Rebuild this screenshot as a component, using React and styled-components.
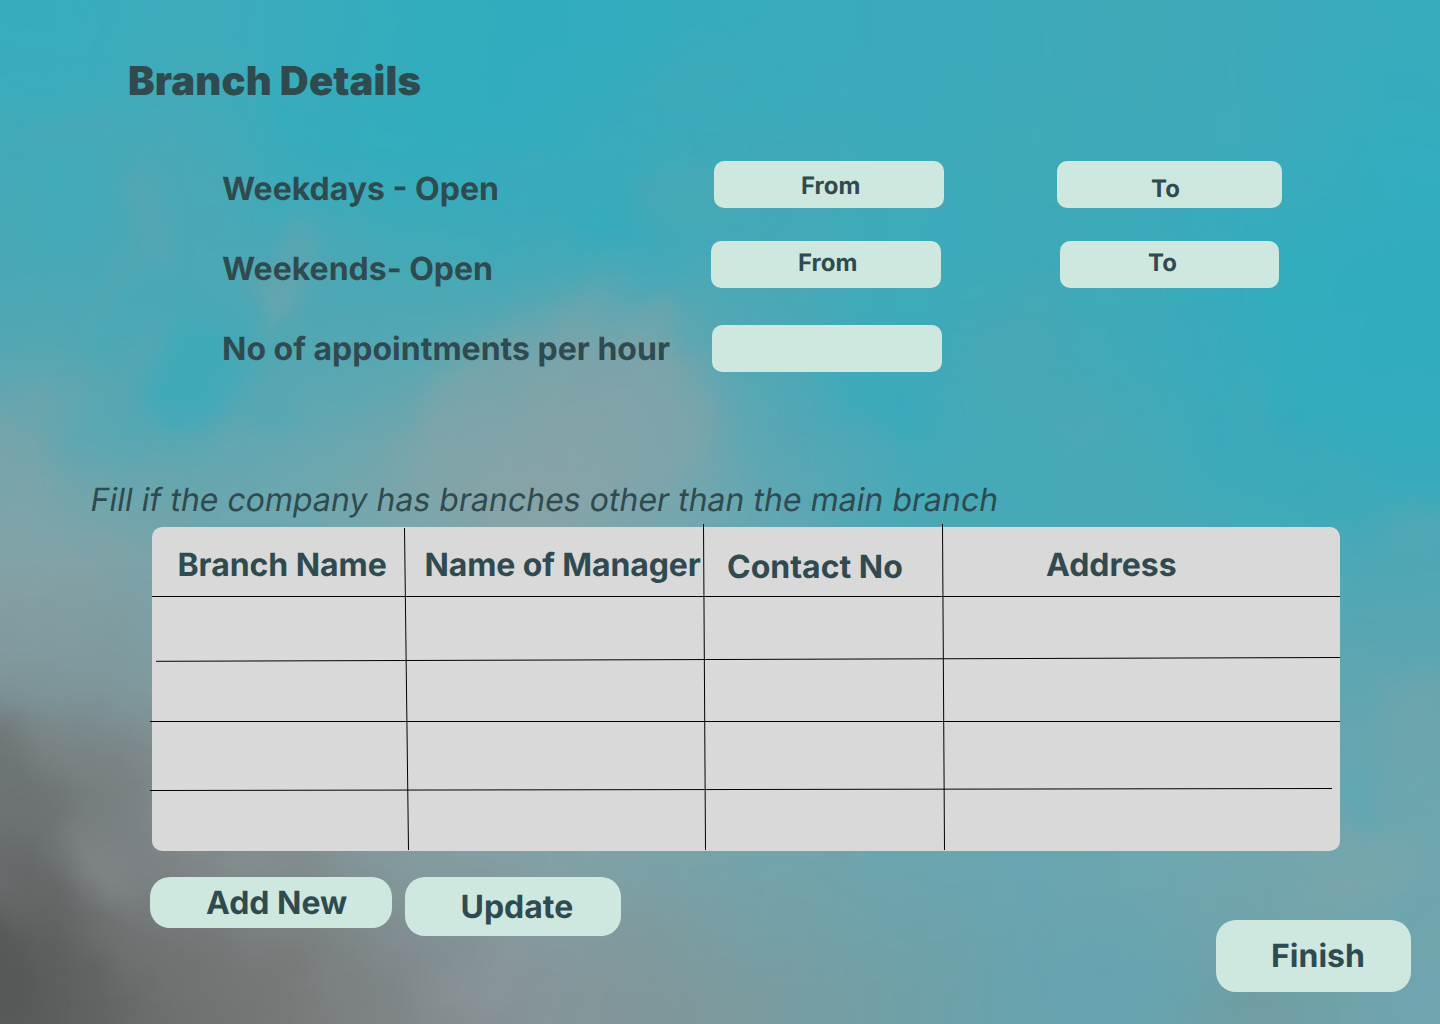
import React from "react";
import styled, { createGlobalStyle } from "styled-components";

const GlobalStyle = createGlobalStyle`
  *, *::before, *::after { box-sizing: border-box; }
  html, body { margin: 0; padding: 0; }
  body {
    font-family: Inter, "Liberation Sans", sans-serif;
    color: #2f4b4f;
    text-rendering: geometricPrecision;
  }
`;

const ink = "#2f4b4f";
const mint = "#cfe8df";

const Page = styled.main`
  position: relative;
  width: 1440px;
  height: 1024px;
  overflow: hidden;
  background: #3fa9b9;
  display: flex;
  flex-direction: column;
  align-items: flex-start;
`;

const Backdrop = styled.svg`
  position: absolute;
  inset: 0;
  width: 100%;
  height: 100%;
`;

const Content = styled.div`
  position: relative;
  width: 100%;
  display: flex;
  flex-direction: column;
  align-items: flex-start;
`;

const Title = styled.h1`
  margin: 57px 0 0 128px;
  font-size: 40px;
  line-height: 48px;
  font-weight: 870;
  letter-spacing: 0.13px;
  white-space: nowrap;
`;

const Form = styled.form`
  width: 100%;
  margin-top: 56px;
  padding-left: 222px;
  display: flex;
  flex-direction: column;
`;

const FormRow = styled.div`
  display: flex;
  align-items: flex-start;
  height: ${(p) => p.$height}px;
`;

const Label = styled.label`
  flex: none;
  width: ${(p) => p.$width}px;
  padding-top: ${(p) => p.$top}px;
  font-size: 32px;
  line-height: 39px;
  font-weight: 700;
  white-space: nowrap;
`;

const Field = styled.div`
  flex: none;
  width: ${(p) => p.$width}px;
  height: 47px;
  margin-right: ${(p) => p.$gap || 0}px;
  padding: ${(p) => p.$top || 0}px 0 0 ${(p) => p.$left || 0}px;
  border-radius: 10px;
  background: ${mint};
  font-size: 24px;
  line-height: 29px;
  font-weight: 700;
`;

const Hint = styled.p`
  margin: 108px 0 0 89px;
  font-size: 32px;
  line-height: 39px;
  font-weight: 400;
  letter-spacing: 0.02px;
  white-space: nowrap;
  transform: skewX(-9.4deg);
  transform-origin: 0 31px;
`;

const Table = styled.section`
  position: relative;
  width: 1188px;
  height: 324px;
  margin: 8px 0 0 152px;
  border-radius: 10px;
  background: #d9d9d9;
`;

const HeaderRow = styled.div`
  display: grid;
  grid-template-columns: 253px 299px 239px 1fr;
  height: 69px;
`;

const HeaderCell = styled.div`
  padding: ${(p) => p.$top}px 0 0 ${(p) => p.$left}px;
  font-size: 32px;
  line-height: 39px;
  font-weight: 700;
  letter-spacing: ${(p) => p.$tracking || 0}px;
  white-space: nowrap;
`;

const Rules = styled.svg`
  position: absolute;
  left: -2px;
  top: -3px;
  width: 1190px;
  height: 327px;
  stroke: #000;
  stroke-width: 1;
  overflow: visible;
`;

const Actions = styled.div`
  width: 100%;
  display: flex;
  align-items: flex-start;
  padding: 26px 29px 0 150px;
`;

const Button = styled.button`
  flex: none;
  width: ${(p) => p.$width}px;
  height: ${(p) => p.$height}px;
  margin: ${(p) => p.$margin || "0"};
  padding: ${(p) => p.$top}px 0 0 ${(p) => p.$left}px;
  display: flex;
  align-items: flex-start;
  border: 0;
  border-radius: 20px;
  background: ${mint};
  color: ${ink};
  font: 700 32px/39px Inter, "Liberation Sans", sans-serif;
  text-rendering: inherit;
  text-align: left;
  white-space: nowrap;
`;

// Sky colours on a 12 x 10 grid, blended together by the blur.
const sky = [
  "36adbd 3eabba 38acbc 32adbe 31acbe 33acbe 38acbc 3baaba 3daaba 40a9b8 3daaba 37acbc",
  "44a9b8 4ca8b5 34acbc 31adbe 33acbe 3cabba 40a9b9 3daaba 3faab8 3da9b9 3eaaba 33adbf",
  "47a8b6 4ba8b5 4ea7b4 43a9b7 40a9b8 40a9b9 48a8b6 3babba 3ca9b9 3daab9 31adbf 31acbe",
  "55a7b2 45a9b6 50a7b3 58a7b1 6aa6ad 6aa6ae 4ea8b5 3baabb 48a8b5 3fa9b9 34acbd 31acbe",
  "72a5ac 5ea7b1 6ba7b0 7aa6ab 86a4a8 7aa6ad 5ca7b3 45a9b8 46a9b7 48a9b6 36abbc 33acbe",
  "84a3a8 76a3a9 70a7af 7ca6ac 84a4a8 76a6ad 62a7b2 4ca8b5 45a9b7 48a9b6 46a9b7 4fa7b4",
  "7f989c 7f9ea3 80a0a4 7ca0a6 7ca0a6 76a3aa 6ca6b0 62a7b2 5aa7b3 55a7b3 55a7b3 5ea6b1",
  "747b7b 828f92 84989c 82a0a4 7fa2a7 78a4aa 70a6af 6aa7b0 66a7b1 64a7b1 62a7b1 6ca6af",
  "6a6d6d 808689 808b8c 849ca0 80a2a7 7aa1a7 72a4ac 6ca5af 69a6b1 6ea6af 74a6ad 6fa6af",
  "5c5d5d 6f7070 797b7a 80878a 869598 7f9799 789ca1 70a0a7 68a3ae 67a5b0 709fa5 70a4ae",
].map((row) => row.split(" "));

// Wisps and clouds: x, y, rx, ry, rotation, colour, opacity, softness.
const clouds = [
  [560, 425, 155, 100, -10, "#8aa3a7", 0.45, "mid"],
  [600, 380, 80, 60, -20, "#8ba3a7", 0.25, "mid"],
  [600, 325, 125, 32, -4, "#6aa6af", 0.4, "mid"],
  [655, 335, 20, 44, 35, "#82a4a8", 0.25, "fine"],
  [283, 280, 20, 68, 24, "#6ca5ad", 0.45, "fine"],
  [272, 300, 14, 18, 10, "#7ba4a9", 0.4, "fine"],
  [150, 208, 18, 58, -15, "#64a5ae", 0.35, "fine"],
  [122, 268, 10, 66, 20, "#64a5ae", 0.3, "fine"],
  [60, 205, 28, 55, 10, "#3cabba", 0.4, "mid"],
  [75, 130, 55, 14, -15, "#5aa6b0", 0.25, "fine"],
  [195, 380, 52, 46, 0, "#37aabb", 0.6, "mid"],
  [130, 360, 8, 50, 28, "#68a6ae", 0.45, "fine"],
  [105, 430, 42, 30, 0, "#4ba9b6", 0.5, "mid"],
  [285, 355, 9, 46, 20, "#5fa6b0", 0.4, "fine"],
  [280, 415, 24, 16, 0, "#4ca9b7", 0.4, "fine"],
  [10, 460, 26, 60, -20, "#85a3a8", 0.35, "mid"],
  [530, 160, 36, 8, -30, "#48a8b5", 0.5, "fine"],
  [690, 195, 55, 32, 0, "#50a7b2", 0.5, "mid"],
  [595, 220, 40, 30, 0, "#31adbe", 0.65, "mid"],
  [695, 80, 55, 26, -35, "#43a9b7", 0.5, "mid"],
  [1030, 325, 20, 76, 28, "#56a6b0", 0.3, "mid"],
  [875, 400, 62, 32, 14, "#35abbc", 0.6, "mid"],
  [895, 380, 26, 7, -35, "#51a8b4", 0.4, "fine"],
  [1080, 415, 42, 24, 30, "#56a7b1", 0.35, "mid"],
  [1260, 425, 16, 55, -20, "#4ca8b5", 0.5, "mid"],
  [1325, 465, 46, 20, 35, "#48a8b5", 0.45, "mid"],
  [1415, 535, 38, 18, -20, "#62a7b0", 0.45, "mid"],
  [1420, 720, 30, 50, 0, "#76a5ab", 0.5, "mid"],
  [1362, 795, 20, 42, 0, "#5ba8b3", 0.6, "fine"],
  [1355, 875, 64, 36, -15, "#7ea6aa", 0.5, "mid"],
  [1115, 970, 70, 50, 0, "#63a5b0", 0.45, "mid"],
  [1255, 1010, 70, 20, 0, "#719ba0", 0.5, "mid"],
  [50, 615, 45, 18, -20, "#839da1", 0.5, "mid"],
  [75, 575, 90, 12, -12, "#87a3a6", 0.35, "fine"],
  [0, 755, 26, 60, -20, "#666b6b", 0.5, "mid"],
  [65, 765, 65, 18, 48, "#828b8c", 0.35, "mid"],
  [100, 860, 46, 34, 40, "#8a8f92", 0.5, "mid"],
  [35, 870, 26, 60, -30, "#5d5f5f", 0.3, "mid"],
  [0, 970, 40, 60, -20, "#515252", 0.5, "mid"],
  [135, 955, 80, 18, 35, "#757776", 0.4, "mid"],
  [240, 980, 70, 24, -5, "#747574", 0.45, "mid"],
  [250, 865, 34, 14, 0, "#849292", 0.45, "fine"],
  [495, 960, 18, 64, 15, "#929ea1", 0.4, "mid"],
  [460, 995, 42, 32, 0, "#8c999c", 0.4, "mid"],
];

const rules = [
  [152, 596.5, 1340, 596.5],
  [156, 661.3, 1340, 657.5],
  [150, 721.5, 1340, 721.5],
  [150, 790.5, 1332, 788.5],
  [404.5, 528, 408.5, 850],
  [703.5, 524, 705.5, 850],
  [942.5, 524, 944.5, 850],
];

function Sky() {
  const cw = 120;
  const ch = 102.4;
  const bleed = 160;
  return (
    <Backdrop viewBox="0 0 1440 1024" aria-hidden="true">
      <defs>
        <filter id="blend" filterUnits="userSpaceOnUse" x="-160" y="-160" width="1760" height="1344" colorInterpolationFilters="sRGB">
          <feGaussianBlur stdDeviation="44" />
        </filter>
        <filter id="mid" x="-150%" y="-150%" width="400%" height="400%" colorInterpolationFilters="sRGB">
          <feGaussianBlur stdDeviation="16" />
        </filter>
        <filter id="fine" x="-200%" y="-200%" width="500%" height="500%" colorInterpolationFilters="sRGB">
          <feGaussianBlur stdDeviation="9" />
        </filter>
        <filter id="drift" filterUnits="userSpaceOnUse" x="-80" y="-80" width="1600" height="1184" colorInterpolationFilters="sRGB">
          <feTurbulence type="fractalNoise" baseFrequency="0.011" numOctaves="4" seed="4" />
          <feDisplacementMap in="SourceGraphic" scale="46" xChannelSelector="R" yChannelSelector="G" />
        </filter>
      </defs>
      <g filter="url(#drift)">
        <g filter="url(#blend)" shapeRendering="crispEdges">
          {sky.map((row, r) =>
            row.map((color, c) => {
              const x0 = c === 0 ? -bleed : c * cw;
              const y0 = r === 0 ? -bleed : r * ch;
              const x1 = c === row.length - 1 ? 1440 + bleed : (c + 1) * cw;
              const y1 = r === sky.length - 1 ? 1024 + bleed : (r + 1) * ch;
              return <rect key={`${r}-${c}`} x={x0} y={y0} width={x1 - x0} height={y1 - y0} fill={`#${color}`} />;
            })
          )}
        </g>
        {clouds.map(([x, y, rx, ry, turn, color, opacity, soft], i) => (
          <ellipse
            key={i}
            rx={rx}
            ry={ry}
            transform={`translate(${x} ${y}) rotate(${turn})`}
            fill={color}
            opacity={opacity}
            filter={`url(#${soft})`}
          />
        ))}
      </g>
    </Backdrop>
  );
}

export default function App() {
  return (
    <>
      <GlobalStyle />
      <Page>
        <Sky />
        <Content>
          <Title>Branch Details</Title>
          <Form>
            <FormRow $height={80}>
              <Label $width={492} $top={8}>Weekdays - Open</Label>
              <Field $width={230} $gap={113} $top={10} $left={87}>From</Field>
              <Field $width={225} $top={13} $left={94}>To</Field>
            </FormRow>
            <FormRow $height={84}>
              <Label $width={489} $top={8}>Weekends- Open</Label>
              <Field $width={230} $gap={119} $top={7} $left={87}>From</Field>
              <Field $width={219} $top={7} $left={88}>To</Field>
            </FormRow>
            <FormRow $height={47}>
              <Label $width={490} $top={4}>No of appointments per hour</Label>
              <Field $width={230} />
            </FormRow>
          </Form>
          <Hint>Fill if the company has branches other than the main branch</Hint>
          <Table>
            <HeaderRow>
              <HeaderCell $top={18} $left={25.5} $tracking={-0.05}>Branch Name</HeaderCell>
              <HeaderCell $top={18} $left={19.5} $tracking={-0.12}>Name of Manager</HeaderCell>
              <HeaderCell $top={20} $left={23}>Contact No</HeaderCell>
              <HeaderCell $top={18} $left={103}>Address</HeaderCell>
            </HeaderRow>
            <Rules viewBox="150 524 1190 327" aria-hidden="true">
              {rules.map(([x1, y1, x2, y2], i) => (
                <line key={i} x1={x1} y1={y1} x2={x2} y2={y2} />
              ))}
            </Rules>
          </Table>
          <Actions>
            <Button type="button" $width={242} $height={51} $top={6} $left={56}>Add New</Button>
            <Button type="button" $width={216} $height={59} $top={10} $left={55.5} $margin="0 0 0 13px">Update</Button>
            <Button type="button" $width={195} $height={72} $top={16} $left={55} $margin="43px 0 0 auto">Finish</Button>
          </Actions>
        </Content>
      </Page>
    </>
  );
}
